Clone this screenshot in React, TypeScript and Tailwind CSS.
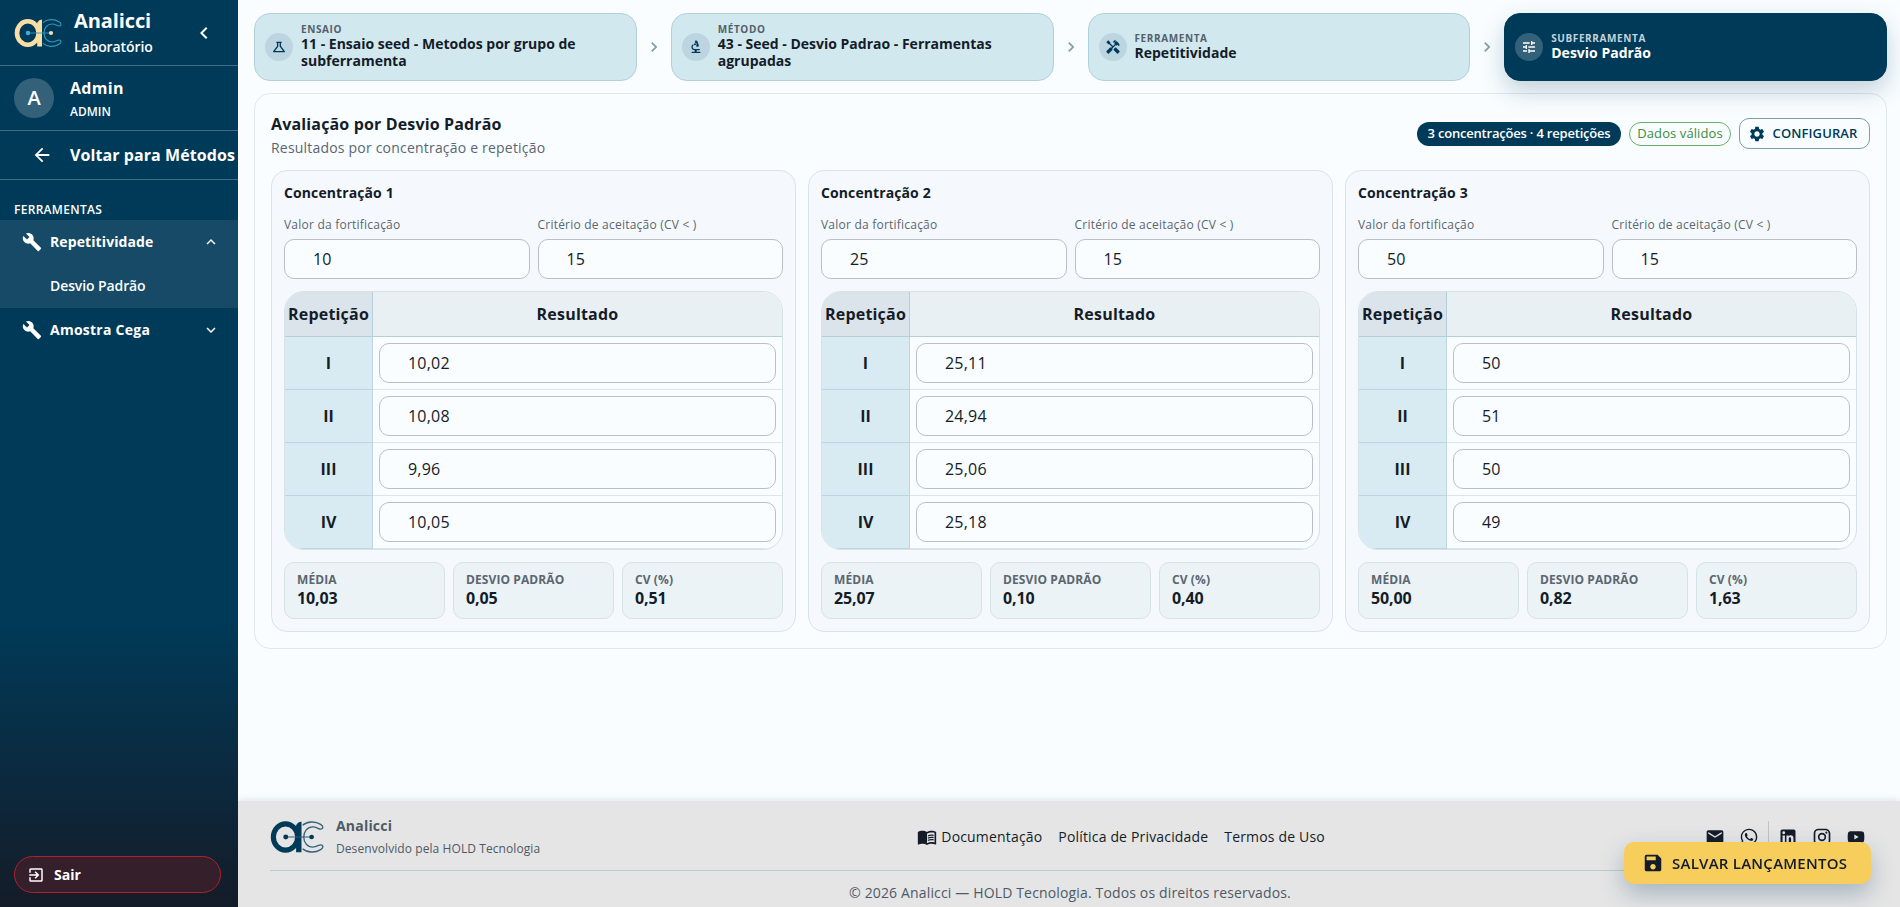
import React, { useState } from 'react';
import {
  MdArrowBack,
  MdBiotech,
  MdBuild,
  MdChevronLeft,
  MdChevronRight,
  MdEmail,
  MdExitToApp,
  MdExpandLess,
  MdExpandMore,
  MdHandyman,
  MdMenuBook,
  MdOutlineScience,
  MdSave,
  MdSettings,
  MdTune,
  MdWhatsapp,
} from 'react-icons/md';

interface Concentration {
  fortification: string;
  criteria: string;
  results: string[];
}

const ROMAN = ['I', 'II', 'III', 'IV'];

const initialData: Concentration[] = [
  { fortification: '10', criteria: '15', results: ['10,02', '10,08', '9,96', '10,05'] },
  { fortification: '25', criteria: '15', results: ['25,11', '24,94', '25,06', '25,18'] },
  { fortification: '50', criteria: '15', results: ['50', '51', '50', '49'] },
];

const parse = (value: string) => parseFloat(value.replace(',', '.')) || 0;
const format = (value: number) => value.toFixed(2).replace('.', ',');

const calculateStats = (results: string[]) => {
  const values = results.map(parse);
  const mean = values.reduce((a, b) => a + b, 0) / values.length;
  const sd = Math.sqrt(values.reduce((a, b) => a + (b - mean) ** 2, 0) / (values.length - 1));
  return { mean, sd, cv: mean ? (sd / mean) * 100 : 0 };
};

const Logo: React.FC<{ className: string; main: string; outline: string; left: string; right: string }> = ({
  className,
  main,
  outline,
  left,
  right,
}) => (
  <svg viewBox="0 0 48 30" className={className} fill="none">
    <ellipse cx="13.8" cy="15" rx="10.8" ry="11.7" stroke={main} strokeWidth="4.6" />
    <path d="M23.2 4.5 Q25 1.4 28 1.4 V28.6 H23.2 V4.5Z" fill={main} />
    <path
      d="M29 4.6 C33 1 40 0.6 45 3.8 C47.8 5.6 47.4 7.6 45.4 8 C43.4 8.3 41.8 6 38 6 C33.2 6 30 10 30 15 C30 20 33.2 24 38 24 C41.8 24 43.4 21.7 45.4 22 C47.4 22.4 47.8 24.4 45 26.2 C40 29.4 33 29 29 25.4"
      stroke={outline}
      strokeWidth="1.2"
    />
    <path d="M14 15 H37" stroke={outline} strokeWidth="0.9" />
    <circle cx="14" cy="15" r="2.2" fill={left} />
    <circle cx="37" cy="15" r="2.1" fill={right} />
  </svg>
);

const Sidebar: React.FC = () => (
  <aside className="flex w-[238px] shrink-0 flex-col bg-[linear-gradient(180deg,#003a59_0%,#003a59_68%,#141c28_100%)] text-white">
    <div className="flex h-[66px] items-center border-b border-white/25 pl-3.5">
      <Logo className="h-[30px] w-12" main="#f9dfa4" outline="#3596b5" left="#41b0d3" right="#f9dfa4" />
      <div className="ml-3 flex-1">
        <div className="text-[20px] leading-6 font-bold tracking-[-0.1px]">Analicci</div>
        <div className="mt-1 text-sm font-semibold tracking-[-0.1px]">Laboratório</div>
      </div>
      <MdChevronLeft className="mr-[22px] size-6" />
    </div>

    <div className="flex h-[65px] items-center border-b border-white/25 pl-3.5">
      <div className="flex size-10 items-center justify-center rounded-full bg-[#33617a] text-xl font-semibold">A</div>
      <div className="ml-4 pt-0.5">
        <div className="text-base leading-6 font-bold tracking-[0.3px]">Admin</div>
        <div className="mt-0.5 text-xs leading-5 font-semibold">ADMIN</div>
      </div>
    </div>

    <div className="flex h-[49px] items-center border-b border-white/25 pl-[31px]">
      <MdArrowBack className="size-[22px]" />
      <span className="ml-[17px] text-base font-bold tracking-[0.08px] whitespace-nowrap">Voltar para Métodos</span>
    </div>

    <div className="mt-5 h-5 pl-3.5 text-xs leading-5 font-semibold tracking-[0.3px]">FERRAMENTAS</div>
    <nav>
      <div className="bg-[#164a66]">
        <div className="flex h-11 items-center pr-4 pl-[22px]">
          <MdBuild className="size-5" />
          <span className="ml-2 flex-1 text-sm font-bold tracking-[0.1px]">Repetitividade</span>
          <MdExpandLess className="mr-0.5 size-[18px]" />
        </div>
        <div className="flex h-11 items-center pl-[50px] text-sm font-semibold tracking-[-0.1px]">Desvio Padrão</div>
      </div>
      <div className="flex h-11 items-center pr-4 pl-[22px]">
        <MdBuild className="size-5" />
        <span className="ml-2 flex-1 text-sm font-bold tracking-[0.25px]">Amostra Cega</span>
        <MdExpandMore className="mr-0.5 size-[18px]" />
      </div>
    </nav>

    <button className="mx-3.5 mt-auto mb-3.5 flex h-[37px] w-[207px] items-center rounded-full border border-[#b3202a] bg-[#351f2b] pl-3 text-sm font-bold">
      <MdExitToApp className="size-[18px]" />
      <span className="ml-[9px]">Sair</span>
    </button>
  </aside>
);

interface StepProps {
  icon: React.ReactNode;
  label: string;
  value: string;
  active?: boolean;
}

const Step: React.FC<StepProps> = ({ icon, label, value, active }) => (
  <div
    className={`flex h-[68px] min-w-0 flex-1 items-center rounded-2xl border pl-2.5 ${
      active
        ? 'border-[#003a59] bg-[#003a59] text-white shadow-[0_10px_24px_rgba(0,58,89,0.22)]'
        : 'border-[#b2d0dc] bg-[#d2e8ef] text-[#141c28]'
    }`}
  >
    <div
      className={`flex size-7 shrink-0 items-center justify-center rounded-full ${
        active ? 'bg-[#33617a] text-white' : 'bg-[#bdd5e1] text-[#003a59]'
      }`}
    >
      {icon}
    </div>
    <div className="ml-2 pr-8 pb-0.5">
      <div className={`text-[10px] leading-3 font-bold tracking-[0.6px] ${active ? 'text-[#c5d2da]' : 'text-[#52616c]'}`}>
        {label}
      </div>
      <div className="text-sm leading-[17px] font-bold">{value}</div>
    </div>
  </div>
);

const StepArrow: React.FC = () => (
  <div className="flex w-[34px] shrink-0 justify-center">
    <MdChevronRight className="size-5 text-[#7f9dac]" />
  </div>
);

const inputClass =
  'h-10 w-full min-w-0 rounded-[10px] border border-[#b9bfc4] bg-[#f9fdff] pl-7 text-base text-[#141c28] outline-none';

interface CardProps {
  index: number;
  data: Concentration;
  onChange: (data: Concentration) => void;
}

const ConcentrationCard: React.FC<CardProps> = ({ index, data, onChange }) => {
  const { mean, sd, cv } = calculateStats(data.results);
  const stats = [
    { label: 'MÉDIA', value: mean },
    { label: 'DESVIO PADRÃO', value: sd },
    { label: 'CV (%)', value: cv },
  ];

  const handleResult = (row: number, value: string) => {
    onChange({ ...data, results: data.results.map((r, i) => (i === row ? value : r)) });
  };

  return (
    <section className="h-[462px] rounded-2xl border border-[#d8e4ea] bg-[#f5f9fd] px-3 pt-3">
      <h3 className="text-sm leading-5 font-bold tracking-[0.1px]">Concentração {index + 1}</h3>

      <div className="mt-3 grid grid-cols-2 gap-2">
        <label className="block text-xs leading-5 tracking-[0.22px] text-[#5b6670]">
          <span className="block h-6">Valor da fortificação</span>
          <input
            className={inputClass}
            value={data.fortification}
            onChange={(e) => onChange({ ...data, fortification: e.target.value })}
          />
        </label>
        <label className="block text-xs leading-5 tracking-[0.22px] text-[#5b6670]">
          <span className="block h-6">Critério de aceitação (CV &lt; )</span>
          <input
            className={inputClass}
            value={data.criteria}
            onChange={(e) => onChange({ ...data, criteria: e.target.value })}
          />
        </label>
      </div>

      {/* Results table */}
      <div className="mt-3 overflow-hidden rounded-[20px] border border-[#d5e2e8] bg-[#f9fdff]">
        <div className="flex h-[45px] border-b border-[#b5ced9] text-base font-bold tracking-[0.2px]">
          <div className="flex w-[88px] items-center justify-center border-r border-[#b5ced9] bg-[#dae4ea]">Repetição</div>
          <div className="flex flex-1 items-center justify-center bg-[#e9f0f3]">Resultado</div>
        </div>
        {data.results.map((result, row) => (
          <div key={row} className="flex h-[53px]">
            <div className="flex w-[88px] items-center justify-center border-r border-b border-[#bcd5df] bg-[#d9ebf2] text-base font-bold">
              {ROMAN[row]}
            </div>
            <div className="flex flex-1 items-center border-b border-[#dbe6eb] px-1.5">
              <input
                className={`${inputClass} tracking-[0.2px]`}
                value={result}
                onChange={(e) => handleResult(row, e.target.value)}
              />
            </div>
          </div>
        ))}
      </div>

      <div className="mt-3 grid grid-cols-3 gap-2">
        {stats.map((stat) => (
          <div key={stat.label} className="h-[57px] rounded-[10px] border border-[#d5e2e8] bg-[#ecf3f6] px-3 pt-2">
            <div className="text-xs leading-[18px] font-bold tracking-[0.1px] text-[#5b6670]">{stat.label}</div>
            <div className="text-base leading-[19px] font-bold tracking-[-0.1px]">{format(stat.value)}</div>
          </div>
        ))}
      </div>
    </section>
  );
};

const Footer: React.FC = () => (
  <footer className="h-[106px] shrink-0 bg-[#e5e5e5] pr-[30px] pl-8 shadow-[0_-2px_6px_rgba(0,58,89,0.1)]">
    <div className="flex h-[70px] items-center justify-between border-b border-[#b9cbd0] pt-[3px]">
      <div className="flex items-center">
        <Logo className="h-[34px] w-[54px]" main="#003a59" outline="#34627a" left="#003a59" right="#003a59" />
        <div className="ml-3 text-[#4d5a66]">
          <div className="text-sm leading-5 font-bold tracking-[0.2px]">Analicci</div>
          <div className="mt-[3px] text-xs leading-5 tracking-[0.08px]">Desenvolvido pela HOLD Tecnologia</div>
        </div>
      </div>
      <div className="mr-[3px] flex items-center gap-4 text-sm tracking-[0.17px] text-[#141c28]">
        <span className="flex items-center gap-1">
          <MdMenuBook className="size-5" />
          Documentação
        </span>
        <span>Política de Privacidade</span>
        <span>Termos de Uso</span>
      </div>
      <div className="flex items-center text-[#141c28]">
        <MdEmail className="size-5" />
        <MdWhatsapp className="ml-3.5 size-5" />
        <div className="mx-[9px] h-8 w-px bg-[#b9c6ce]" />
        <svg viewBox="0 0 24 24" className="size-5" fill="currentColor">
          <path d="M19 3a2 2 0 0 1 2 2v14a2 2 0 0 1-2 2H5a2 2 0 0 1-2-2V5a2 2 0 0 1 2-2h14m-.5 15.5v-5.3a3.26 3.26 0 0 0-3.26-3.26c-.85 0-1.84.52-2.32 1.3v-1.11h-2.79v8.37h2.79v-4.93c0-.77.62-1.4 1.39-1.4a1.4 1.4 0 0 1 1.4 1.4v4.93h2.79M6.88 8.56a1.68 1.68 0 0 0 1.68-1.68c0-.93-.75-1.69-1.68-1.69a1.69 1.69 0 0 0-1.69 1.69c0 .93.76 1.68 1.69 1.68m1.39 9.94v-8.37H5.5v8.37h2.77z" />
        </svg>
        <svg viewBox="0 0 24 24" className="ml-3.5 size-5" fill="currentColor">
          <path d="M7.8 2h8.4C19.4 2 22 4.6 22 7.8v8.4a5.8 5.8 0 0 1-5.8 5.8H7.8C4.6 22 2 19.4 2 16.2V7.8A5.8 5.8 0 0 1 7.8 2m-.2 2A3.6 3.6 0 0 0 4 7.6v8.8C4 18.39 5.61 20 7.6 20h8.8a3.6 3.6 0 0 0 3.6-3.6V7.6C20 5.61 18.39 4 16.4 4H7.6m9.65 1.5a1.25 1.25 0 1 1 0 2.5 1.25 1.25 0 0 1 0-2.5M12 7a5 5 0 1 1 0 10 5 5 0 0 1 0-10m0 2a3 3 0 1 0 0 6 3 3 0 0 0 0-6z" />
        </svg>
        <svg viewBox="0 0 24 24" className="mr-1 ml-3.5 size-5" fill="currentColor">
          <path d="M10 15l5.19-3L10 9v6m11.56-7.83c.13.47.22 1.1.28 1.9.07.8.1 1.49.1 2.09L22 12c0 2.19-.16 3.8-.44 4.83-.25.9-.83 1.48-1.73 1.73-.47.13-1.33.22-2.65.28-1.3.07-2.49.1-3.59.1L12 19c-4.19 0-6.8-.16-7.83-.44-.9-.25-1.48-.83-1.73-1.73-.13-.47-.22-1.1-.28-1.9-.07-.8-.1-1.49-.1-2.09L2 12c0-2.19.16-3.8.44-4.83.25-.9.83-1.48 1.73-1.73.47-.13 1.33-.22 2.65-.28 1.3-.07 2.49-.1 3.59-.1L12 5c4.19 0 6.8.16 7.83.44.9.25 1.48.83 1.73 1.73z" />
        </svg>
      </div>
    </div>
    <div className="pt-3 text-center text-sm tracking-[0.15px] text-[#4d5a66]">
      © 2026 Analicci — HOLD Tecnologia. Todos os direitos reservados.
    </div>
  </footer>
);

const App: React.FC = () => {
  const [data, setData] = useState<Concentration[]>(initialData);

  const handleChange = (index: number, next: Concentration) => {
    setData((prev) => prev.map((item, i) => (i === index ? next : item)));
  };

  return (
    <div className="flex h-[907px] overflow-hidden bg-[#f9fdff] font-['Open_Sans','Noto_Sans',sans-serif] text-[#141c28]">
      <Sidebar />
      <div className="flex min-w-0 flex-1 flex-col">
        <main className="flex-1 pt-[13px] pr-[13px] pl-4">
          <div className="flex items-center">
            <Step icon={<MdOutlineScience className="size-4" />} label="ENSAIO" value="11 - Ensaio seed - Metodos por grupo de subferramenta" />
            <StepArrow />
            <Step icon={<MdBiotech className="size-4" />} label="MÉTODO" value="43 - Seed - Desvio Padrao - Ferramentas agrupadas" />
            <StepArrow />
            <Step icon={<MdHandyman className="size-4" />} label="FERRAMENTA" value="Repetitividade" />
            <StepArrow />
            <Step icon={<MdTune className="size-4" />} label="SUBFERRAMENTA" value="Desvio Padrão" active />
          </div>

          <div className="mt-3 h-[556px] rounded-2xl border border-[#dfe8ec] px-4 pt-4">
            <div className="flex h-[60px] items-start justify-between">
              <div className="pt-0.5">
                <h2 className="text-base leading-6 font-bold tracking-[0.15px]">Avaliação por Desvio Padrão</h2>
                <p className="text-sm leading-6 tracking-[0.2px] text-[#5b6670]">Resultados por concentração e repetição</p>
              </div>
              <div className="flex items-center gap-2 pt-2">
                <span className="flex h-6 w-[204px] items-center justify-center rounded-full bg-[#003a59] text-[13px] font-semibold tracking-[-0.2px] whitespace-nowrap text-white">
                  3 concentrações · 4 repetições
                </span>
                <span className="flex h-6 w-[102px] items-center justify-center rounded-full border border-[#66b06a] text-[13px] tracking-[0.1px] text-[#3c8c40]">
                  Dados válidos
                </span>
                <button className="flex h-[31px] w-[131px] items-center justify-center gap-[7px] rounded-[10px] border border-[#7f9cac] pr-1 text-[13px] font-semibold tracking-[0.1px] text-[#003a59]">
                  <MdSettings className="size-[18px]" />
                  CONFIGURAR
                </button>
              </div>
            </div>

            <div className="grid grid-cols-3 gap-3">
              {data.map((item, i) => (
                <ConcentrationCard key={i} index={i} data={item} onChange={(next) => handleChange(i, next)} />
              ))}
            </div>
          </div>
        </main>
        <Footer />
      </div>

      <button className="fixed right-[29px] bottom-[23px] flex h-[42px] w-[247px] items-center rounded-[10px] bg-[#f7cd5b] pl-[18px] text-[15px] font-semibold tracking-[0.25px] text-[#141c28] shadow-[0_10px_24px_rgba(0,58,89,0.28)]">
        <MdSave className="size-[22px]" />
        <span className="ml-2 whitespace-nowrap">SALVAR LANÇAMENTOS</span>
      </button>
    </div>
  );
};

export default App;
